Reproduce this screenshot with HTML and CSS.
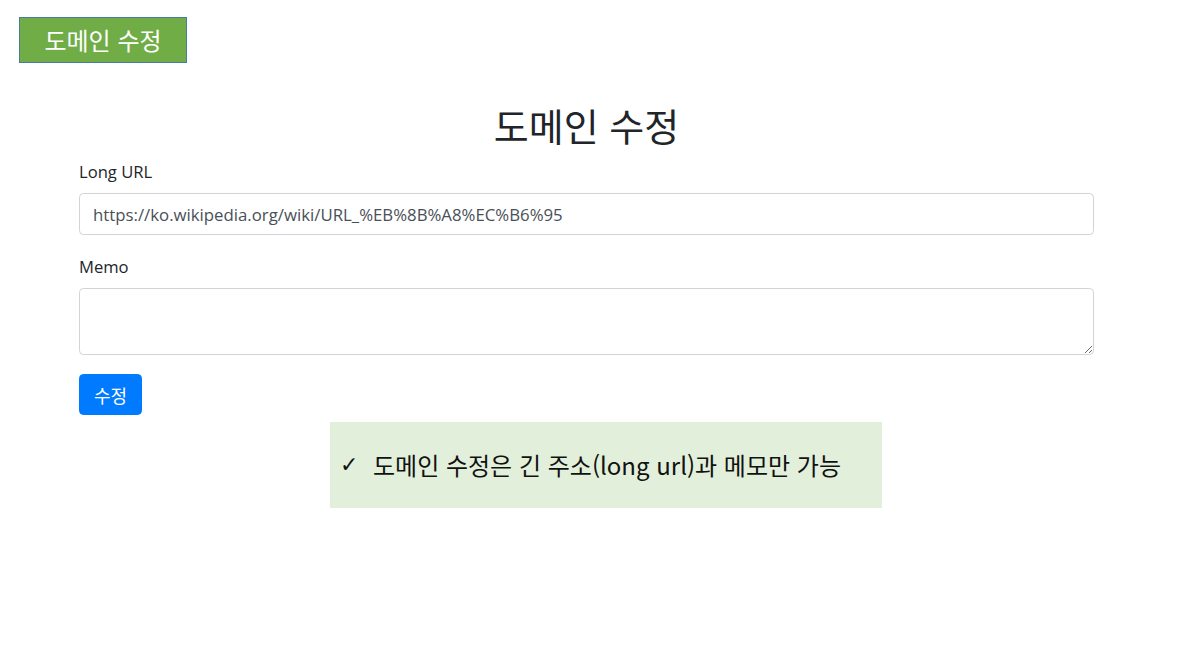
FILE: index.html
```html
<!DOCTYPE html>
<html lang="ko">
<head>
<meta charset="utf-8">
<title>도메인 수정</title>
<link rel="stylesheet" href="styles.css">
</head>
<body>
<div class="badge">도메인 수정</div>
<main class="container">
  <h1 class="title">도메인 수정</h1>
  <form class="form">
    <div class="form-group">
      <label class="label" for="url">Long URL</label>
      <input class="control" id="url" type="text" value="https://ko.wikipedia.org/wiki/URL_%EB%8B%A8%EC%B6%95">
    </div>
    <div class="form-group">
      <label class="label" for="memo">Memo</label>
      <textarea class="control area" id="memo" rows="2"></textarea>
    </div>
    <button class="btn" type="button">수정</button>
  </form>
</main>
<div class="note"><span class="check">✓</span>도메인 수정은 긴 주소(long url)과 메모만 가능</div>
</body>
</html>
```
FILE: styles.css
```css
* { box-sizing: border-box; }
html, body { margin: 0; padding: 0; background: #fff; }
body {
  font-family: "Open Sans", "Noto Sans CJK KR", sans-serif;
  font-size: 17.4px;
  line-height: 1.5;
  color: #212529;
  position: relative;
  min-height: 667px;
}
.badge {
  position: absolute;
  left: 19px;
  top: 17px;
  width: 168px;
  height: 46px;
  background: #70ad47;
  border: 1.5px solid #4a7ca3;
  color: #fff;
  font-family: "Noto Sans CJK KR", sans-serif;
  font-size: 24px;
  display: flex;
  align-items: center;
  justify-content: center;
  line-height: 1;
}
.container {
  width: 1015px;
  margin: 0 auto 0 79px;
  padding-top: 99px;
}
.title {
  margin: 0 0 8px;
  text-align: center;
  font-family: "Noto Sans CJK KR", sans-serif;
  font-weight: 400;
  font-size: 38px;
  line-height: 52px;
}
.form-group { margin-bottom: 18.8px; display: flex; flex-direction: column; }
.label { display: block; margin-bottom: 9px; line-height: 25px; font-size: 16.6px; }
.control {
  display: block;
  width: 100%;
  height: 42px;
  padding: 6.5px 13px;
  font-family: inherit;
  font-size: 16.8px;
  line-height: 1.5;
  color: #495057;
  background: #fff;
  border: 1px solid #ced4da;
  border-radius: 4.4px;
}
.area { height: 67.5px; resize: vertical; }
.btn {
  display: block;
  height: 41px;
  width: 63px;
  padding: 0;
  background: #007bff;
  color: #fff;
  border: 1px solid #007bff;
  border-radius: 4.4px;
  font-family: "Noto Sans CJK KR", sans-serif;
  font-size: 18px;
  line-height: 1;
}
.note {
  position: absolute;
  left: 330px;
  top: 422px;
  width: 552px;
  height: 86px;
  background: #e2efda;
  display: flex;
  align-items: center;
  padding-left: 10px;
  font-family: "Noto Sans CJK KR", sans-serif;
  font-size: 24px;
  color: #111;
  line-height: 1;
}
.check { display: inline-block; width: 33px; font-family: "DejaVu Sans", sans-serif; font-size: 22px; font-weight: 700; }
```
